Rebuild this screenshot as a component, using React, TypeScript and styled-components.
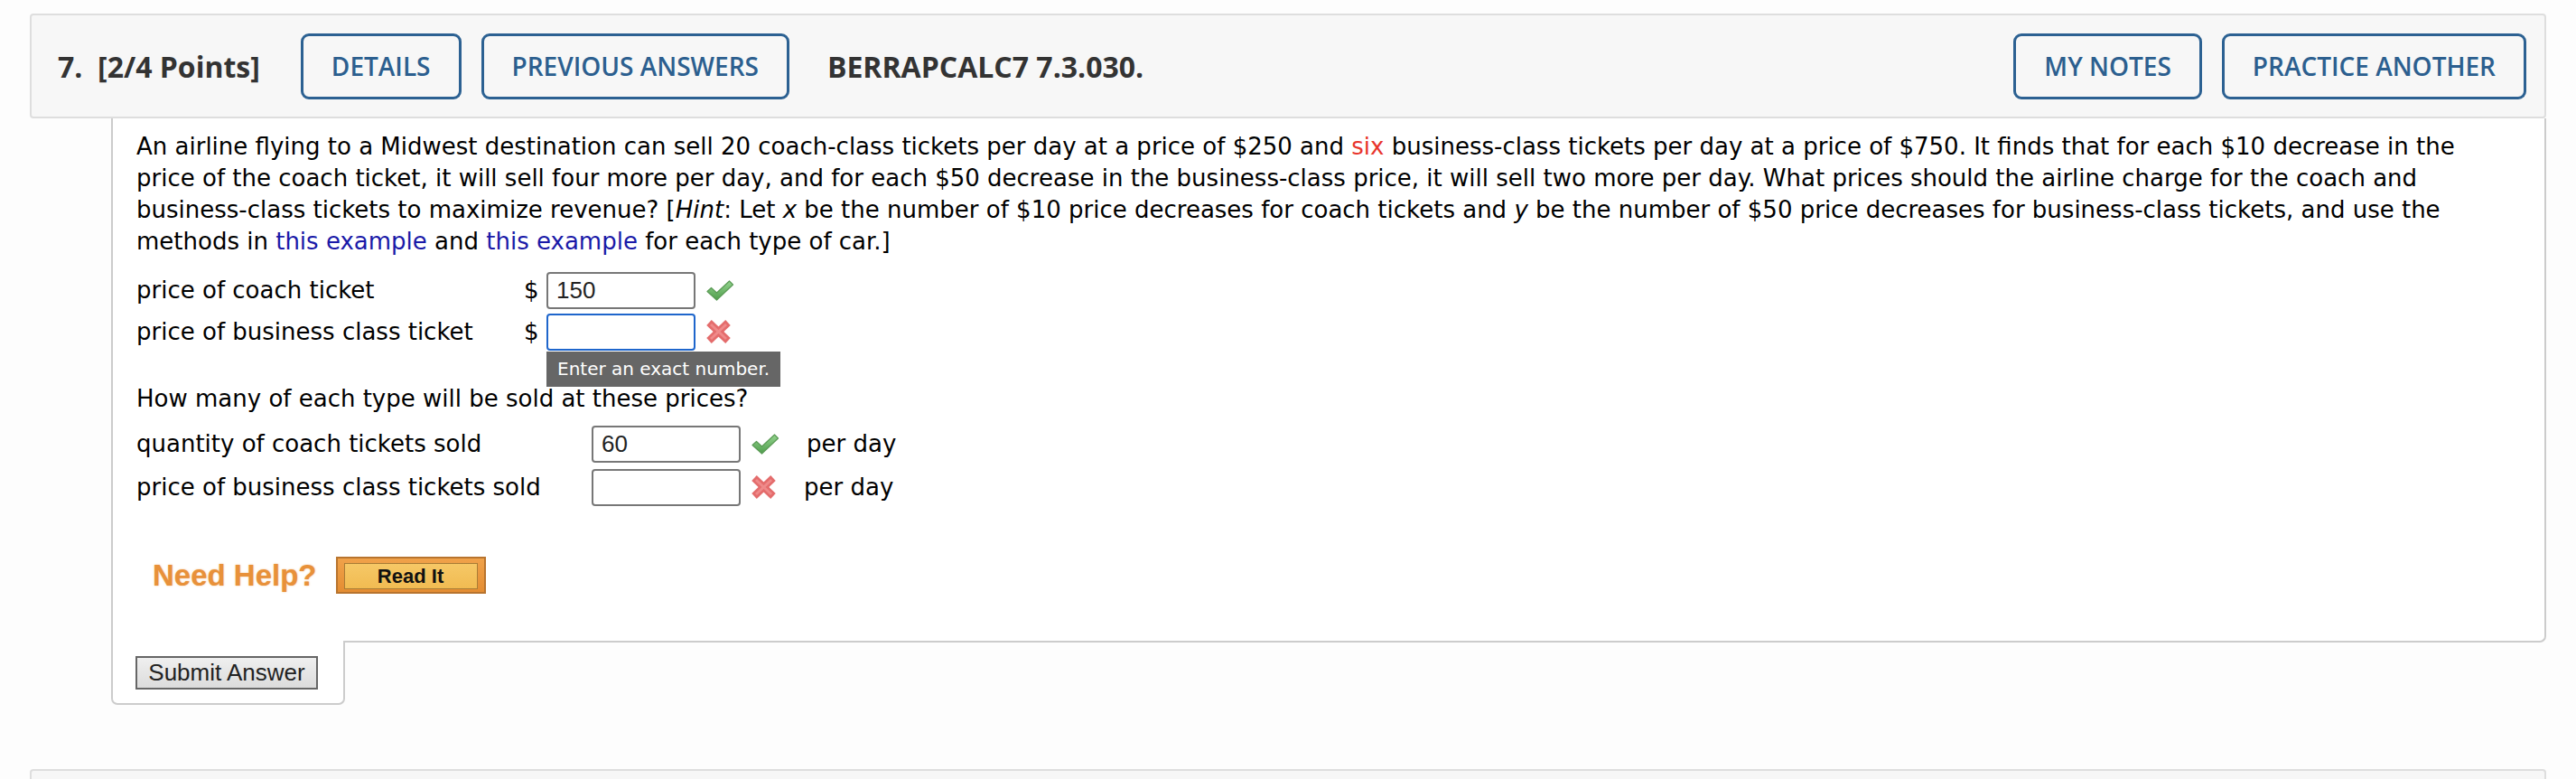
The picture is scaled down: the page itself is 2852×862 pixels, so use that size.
import React from 'react';
import styled, { createGlobalStyle } from 'styled-components';

const GlobalStyle = createGlobalStyle`
  html, body {
    margin: 0;
    padding: 0;
    background: #fdfdfd;
  }
  body {
    font-family: "DejaVu Sans", Verdana, sans-serif;
    color: #000;
  }
`;

const Page = styled.div`
  width: 2786px;
  padding: 15px 0 0 33px;
`;

const Header = styled.header`
  display: flex;
  align-items: center;
  box-sizing: border-box;
  height: 116px;
  padding: 0 20px 0 29px;
  background: #f7f7f7;
  border: 2px solid #dedede;
  border-radius: 4px;
  font-family: "Open Sans", sans-serif;
`;

const Title = styled.div`
  font-size: 32px;
  font-weight: 700;
  color: #333;
  margin-right: 45px;
  white-space: pre;
`;

const HeaderButton = styled.button<{ $gapLeft?: number }>`
  height: 73px;
  box-sizing: border-box;
  padding: 0 31px;
  margin-left: ${(p) => p.$gapLeft ?? 0}px;
  background: transparent;
  border: 3px solid #2c6192;
  border-radius: 9px;
  color: #2c5f8f;
  font-family: "Open Sans", sans-serif;
  font-size: 28px;
  font-weight: 600;
  text-transform: uppercase;
  cursor: pointer;
`;

const Code = styled.div`
  margin-left: 42px;
  font-size: 32px;
  font-weight: 700;
  color: #333;
`;

const Spacer = styled.div`
  flex: 1;
`;

const Panel = styled.section`
  margin-left: 90px;
  width: 2696px;
`;

const Question = styled.div`
  box-sizing: border-box;
  padding: 14px 28px 52px 26px;
  background: #fff;
  border: 2px solid #cccccc;
  border-top: none;
  border-bottom-right-radius: 7px;
`;

const Prompt = styled.p`
  margin: 0;
  font-size: 26px;
  line-height: 35px;
`;

const Link = styled.a`
  color: #1a1aa8;
  text-decoration: none;
`;

const Red = styled.span`
  color: #e8352c;
`;

const Rows = styled.div<{ $top: number }>`
  margin-top: ${(p) => p.$top}px;
`;

const Row = styled.div<{ $height: number }>`
  display: flex;
  align-items: center;
  height: ${(p) => p.$height}px;
  font-size: 26px;
`;

const Label = styled.div<{ $width: number }>`
  width: ${(p) => p.$width}px;
  flex: none;
`;

const Dollar = styled.span`
  width: 25px;
  flex: none;
`;

const Field = styled.div`
  position: relative;
  flex: none;
`;

const Input = styled.div<{ $focused?: boolean }>`
  box-sizing: border-box;
  width: 165px;
  height: 41px;
  padding: 0 9px;
  display: flex;
  align-items: center;
  background: #fff;
  border: 2px solid ${(p) => (p.$focused ? '#1f66cc' : '#777')};
  border-radius: 4px;
  font-family: "Liberation Sans", Arial, sans-serif;
  font-size: 26px;
  color: #222;
`;

const Tooltip = styled.div`
  position: absolute;
  left: 0;
  top: 42px;
  white-space: nowrap;
  padding: 0 12px;
  height: 39px;
  line-height: 39px;
  background: #666;
  color: #fff;
  font-size: 20px;
  z-index: 2;
`;

const Mark = styled.span`
  display: inline-flex;
  margin-left: 11px;
  width: 32px;
  flex: none;
`;

const PerDay = styled.span<{ $left: number }>`
  margin-left: ${(p) => p.$left}px;
`;

const SubQuestion = styled.p`
  margin: 34px 0 0;
  font-size: 26px;
  line-height: 35px;
`;

const HelpRow = styled.div`
  display: flex;
  align-items: center;
  margin: 53px 0 0 18px;
  height: 41px;
`;

const NeedHelp = styled.span`
  font-family: "Liberation Sans", Arial, sans-serif;
  font-weight: 700;
  font-size: 33px;
  color: #e8913a;
  text-shadow: 0 0 2px rgba(232, 145, 58, 0.6);
  margin-right: 21px;
`;

const ReadIt = styled.button`
  box-sizing: border-box;
  width: 166px;
  height: 41px;
  padding: 5px 7px;
  background: linear-gradient(#f0a24a, #e48d32);
  border: 2px solid #b8742e;
  cursor: pointer;
  span {
    display: flex;
    align-items: center;
    justify-content: center;
    height: 100%;
    background: linear-gradient(#f6c866, #f1bb52);
    border: 1px solid #a97c35;
    font-family: "Liberation Sans", Arial, sans-serif;
    font-weight: 700;
    font-size: 22px;
    color: #111;
  }
`;

const SubmitTab = styled.div`
  box-sizing: border-box;
  width: 259px;
  margin-top: -2px;
  padding: 17px 0 15px 25px;
  background: #fff;
  border: 2px solid #cccccc;
  border-top: none;
  border-radius: 0 0 7px 7px;
`;

const SubmitButton = styled.button`
  box-sizing: border-box;
  width: 202px;
  height: 37px;
  padding: 0;
  background: linear-gradient(#efefef, #dcdcdc);
  border: 2px solid #666;
  font-family: "Liberation Sans", Arial, sans-serif;
  font-size: 26px;
  color: #222;
  cursor: pointer;
`;

const NextHeader = styled.div`
  margin-top: 71px;
  height: 11px;
  box-sizing: border-box;
  background: #f7f7f7;
  border: 2px solid #dedede;
  border-bottom: none;
  border-radius: 4px 4px 0 0;
`;

const Check = () => (
  <svg width="32" height="25" viewBox="0 0 32 25">
    <defs>
      <linearGradient id="chk" x1="0" y1="0" x2="0" y2="1">
        <stop offset="0" stopColor="#94d48e" />
        <stop offset="1" stopColor="#4f9d4c" />
      </linearGradient>
    </defs>
    <path
      d="M2 13.5 L6.5 9.5 L12.5 15 L26.5 2 L30.5 6 L12.5 23 Z"
      fill="url(#chk)"
      stroke="#5a9a55"
      strokeWidth="1.2"
      strokeLinejoin="round"
    />
  </svg>
);

const Cross = () => (
  <svg width="29" height="28" viewBox="0 0 29 28">
    <g stroke="#e36565" strokeWidth="8" strokeLinecap="butt" opacity="0.95">
      <line x1="4" y1="4" x2="25" y2="24" />
      <line x1="25" y1="4" x2="4" y2="24" />
    </g>
    <g stroke="#ef8a8a" strokeWidth="3">
      <line x1="6" y1="6" x2="23" y2="22" />
      <line x1="23" y1="6" x2="6" y2="22" />
    </g>
  </svg>
);

const App: React.FC = () => {
  return (
    <>
      <GlobalStyle />
      <Page>
        <Header>
          <Title>{'7.  [2/4 Points]'}</Title>
          <HeaderButton>Details</HeaderButton>
          <HeaderButton $gapLeft={22}>Previous Answers</HeaderButton>
          <Code>BERRAPCALC7 7.3.030.</Code>
          <Spacer />
          <HeaderButton>My Notes</HeaderButton>
          <HeaderButton $gapLeft={22}>Practice Another</HeaderButton>
        </Header>

        <Panel>
          <Question>
            <Prompt>
              An airline flying to a Midwest destination can sell 20 coach-class tickets per day at a
              price of $250 and <Red>six</Red> business-class tickets per day at a price of $750. It
              finds that for each $10 decrease in the price of the coach ticket, it will sell four more
              per day, and for each $50 decrease in the business-class price, it will sell two more per
              day. What prices should the airline charge for the coach and business-class tickets to
              maximize revenue? [<i>Hint</i>: Let <i>x</i> be the number of $10 price decreases for
              coach tickets and <i>y</i> be the number of $50 price decreases for business-class
              tickets, and use the methods in <Link href="#">this example</Link> and{' '}
              <Link href="#">this example</Link> for each type of car.]
            </Prompt>

            <Rows $top={13}>
              <Row $height={46}>
                <Label $width={429}>price of coach ticket</Label>
                <Dollar>$</Dollar>
                <Field>
                  <Input>150</Input>
                </Field>
                <Mark>
                  <Check />
                </Mark>
              </Row>
              <Row $height={46}>
                <Label $width={429}>price of business class ticket</Label>
                <Dollar>$</Dollar>
                <Field>
                  <Input $focused />
                  <Tooltip>Enter an exact number.</Tooltip>
                </Field>
                <Mark>
                  <Cross />
                </Mark>
              </Row>
            </Rows>

            <SubQuestion>How many of each type will be sold at these prices?</SubQuestion>

            <Rows $top={8}>
              <Row $height={48}>
                <Label $width={504}>quantity of coach tickets sold</Label>
                <Field>
                  <Input>60</Input>
                </Field>
                <Mark>
                  <Check />
                </Mark>
                <PerDay $left={30}>per day</PerDay>
              </Row>
              <Row $height={48}>
                <Label $width={504}>price of business class tickets sold</Label>
                <Field>
                  <Input />
                </Field>
                <Mark>
                  <Cross />
                </Mark>
                <PerDay $left={27}>per day</PerDay>
              </Row>
            </Rows>

            <HelpRow>
              <NeedHelp>Need Help?</NeedHelp>
              <ReadIt>
                <span>Read It</span>
              </ReadIt>
            </HelpRow>
          </Question>

          <SubmitTab>
            <SubmitButton>Submit Answer</SubmitButton>
          </SubmitTab>
        </Panel>

        <NextHeader />
      </Page>
    </>
  );
};

export default App;
